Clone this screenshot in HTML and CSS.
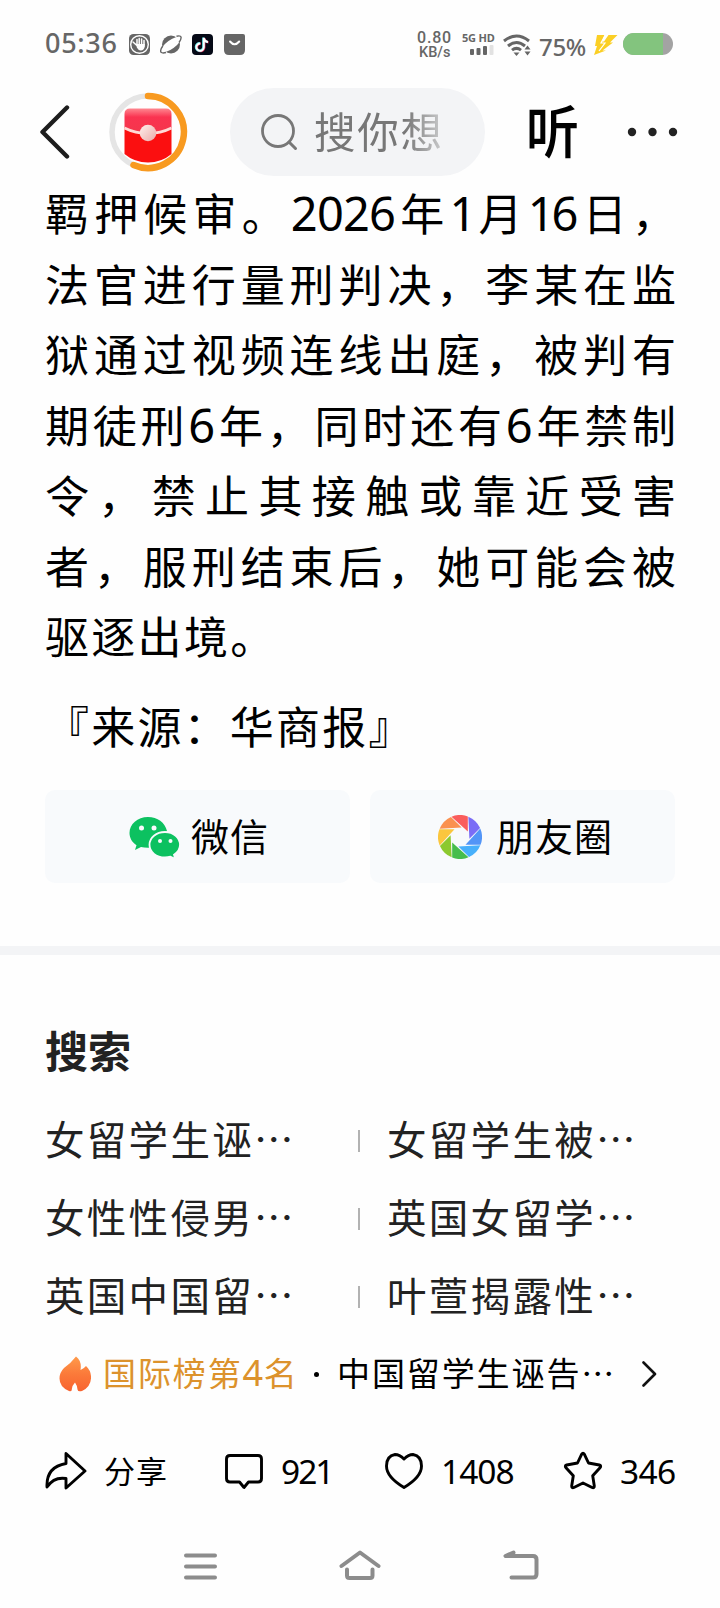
FILE: index.html
```html
<!DOCTYPE html>
<html lang="zh-CN">
<head>
<meta charset="utf-8">
<title>新闻</title>
<link rel="stylesheet" href="styles.css">
</head>
<body>
<div class="status">
  <span class="clock">05:36</span>
  <div class="apps">
    <svg width="21" height="21" viewBox="0 0 21 21"><rect width="21" height="21" rx="4.5" fill="#666"/><circle cx="10.5" cy="10.5" r="8.8" fill="none" stroke="#fff" stroke-width="1.4"/><path d="M4 8l4 3.5V5.500M10.200 10V4.500M12.600 10V5M15 11V6.500" fill="none" stroke="#fff" stroke-width="1.500" stroke-linecap="round"/><path d="M7.500 10h8.300v2.500q-.8 4-4 4-2.500 0-4-3z" fill="#fff"/></svg>
    <svg width="22" height="21" viewBox="0 0 22 21"><circle cx="11" cy="10.500" r="9" fill="#666"/><ellipse cx="11" cy="10.500" rx="11.500" ry="4.300" transform="rotate(-36 11 10.500)" fill="#fff"/><path d="M2.800 12Q-.2 16 1 18.300 2.500 19.500 6 18.500M16.500 2.300Q20.500 1.300 21 3q.5 2-2 5.500" fill="none" stroke="#666" stroke-width="1.400"/></svg>
    <svg width="21" height="21" viewBox="0 0 21 21"><rect width="21" height="21" rx="4" fill="#050916"/><g fill="none" stroke-width="2.300"><path d="M12.300 4v9.500a3.700 3.700 0 1 1-3.500-3.800M12.300 4.500q.8 3.500 4.200 3.800" stroke="#e8315b"/><path d="M11.300 3.500V13a3.700 3.700 0 1 1-3.500-3.800M11.300 4q.8 3.500 4.200 3.800" stroke="#5de4e8"/><path d="M11.800 3.800v9.500a3.700 3.700 0 1 1-3.500-3.800M11.800 4.300q.8 3.500 4.200 3.800" stroke="#fff" stroke-width="1.900"/></g></svg>
    <svg width="21" height="21" viewBox="0 0 21 21"><path d="M2 0h17q2 0 2 2v14q0 5-5 5H5q-5 0-5-5V2q0-2 2-2z" fill="#666"/><path d="M6 7.500q4.600 5.500 9.200 0" fill="none" stroke="#fff" stroke-width="2" stroke-linecap="round"/></svg>
  </div>
  <div class="speed"><span class="speed-value">0.80</span><span class="speed-unit">KB/s</span></div>
  <div class="cell"><span class="cell-label">5G HD</span>
    <svg width="24" height="10" viewBox="0 0 24 10"><g fill="#666"><rect y="4" width="4" height="6" rx="1"/><rect x="6.500" y="3" width="4" height="7" rx="1"/><rect x="13" y="1" width="4" height="9" rx="1"/></g><rect x="19.500" width="4" height="10" rx="1" fill="#e2e2e2"/></svg>
  </div>
  <svg class="wifi" width="29" height="22" viewBox="0 0 29 22"><g fill="none" stroke="#666" stroke-width="3"><path d="M1 7Q13.500-3 26 7"/><path d="M5 12Q13.500 5 22 12"/><path d="M9 16.200Q13.500 12.500 18 16.200"/></g><path d="M10.500 18.500h6L13.500 22z" fill="#666"/><path d="M21.500 15.500l3-4 3 4zM21.500 17.500l3 4 3-4z" fill="#666"/></svg>
  <span class="percent">75%</span>
  <svg class="bolt" width="24" height="21" viewBox="0 0 24 21"><path d="M3 1h7.500L8 7.500h2L14.500 1h9L16 8.500h3L8.500 16.500h3.500L0 21l3-9H1z" fill="#fbcf25"/><path d="M11.500.5L7 9h4l-6 8" fill="none" stroke="#fff" stroke-width="1.200"/></svg>
  <div class="battery"><div class="battery-fill"></div></div>
</div>

<div class="header">
  <svg class="back" width="30" height="54" viewBox="0 0 30 54"><path d="M27 2.500L2.500 27 27 51.500" fill="none" stroke="#1d1d1d" stroke-width="4.400" stroke-linecap="round" stroke-linejoin="round"/></svg>
  <svg class="packet" width="80" height="80" viewBox="0 0 80 80">
    <defs><linearGradient id="flap" x1="0" y1="0" x2="0" y2="1"><stop offset="0" stop-color="#ff8790"/><stop offset=".35" stop-color="#fa3350"/><stop offset="1" stop-color="#f4364c"/></linearGradient><linearGradient id="seal" x1="0" y1="0" x2="1" y2="1"><stop offset="0" stop-color="#fff0ec"/><stop offset="1" stop-color="#eaaaa8"/></linearGradient></defs>
    <circle cx="40" cy="40" r="36" fill="none" stroke="#e5e5e5" stroke-width="5.500"/>
    <path d="M40 4A36 36 0 1 1 25.500 73" fill="none" stroke="#f89a20" stroke-width="6.500" stroke-linecap="round"/>
    <path d="M16.500 36h47v26q-10 8.500-23.500 8.500T16.500 62z" fill="#fb0f10"/>
    <path d="M16.500 36V22q0-5.500 5.500-5.500h36q5.500 0 5.500 5.500v14q-11 5-23.500 5t-23.500-5z" fill="url(#flap)"/>
    <path d="M16.500 36q11 5.500 23.500 5.500T63.500 36" fill="none" stroke="#ffd9d5" stroke-width="2.800"/>
    <circle cx="40" cy="41" r="8.300" fill="url(#seal)"/>
  </svg>
  <div class="search">
    <svg width="37" height="37" viewBox="0 0 37 37"><circle cx="17" cy="17" r="15.500" fill="none" stroke="#777" stroke-width="2.800"/><path d="M28 28l6.500 6.500" stroke="#777" stroke-width="3" stroke-linecap="round"/></svg>
    <span class="search-text">搜你想</span>
  </div>
  <span class="listen">听</span>
  <svg class="more" width="52" height="10" viewBox="0 0 52 10"><g fill="#222"><circle cx="5" cy="5" r="4.200"/><circle cx="25.500" cy="5" r="4.200"/><circle cx="46" cy="5" r="4.200"/></g></svg>
</div>

<div class="article">
  <div class="line">羁押候审。<span class="num tight">2026</span>年<span class="num one">1</span>月<span class="num one">1</span><span class="num tight">6</span>日，</div>
  <div class="line">法官进行量刑判决，李某在监</div>
  <div class="line">狱通过视频连线出庭，被判有</div>
  <div class="line">期徒刑<span class="num">6</span>年，同时还有<span class="num">6</span>年禁制</div>
  <div class="line">令，禁止其接触或靠近受害</div>
  <div class="line">者，服刑结束后，她可能会被</div>
  <div class="line last">驱逐出境。</div>
  <div class="source">『来源：华商报』</div>
</div>

<div class="share">
  <div class="share-btn">
    <svg class="wechat" width="52" height="42" viewBox="0 0 52 42"><path d="M19 0C8.500 0 .5 7 .5 16c0 5 2.700 9.300 7 12.200L6 33l6-3q3.500 1 9 .8L38 14C36 5.500 28.500 0 19 0z" fill="#0cc160"/><path d="M36 15c-8.800 0-15.500 5.600-15.500 12.800S27.200 40.500 36 40.500q3 0 5.500-.8l4.700 2.300-1.200-4.300c3.800-2.400 6-5.800 6-9.900C51 20.600 44.500 15 36 15z" fill="#0cc160" stroke="#f8fafc" stroke-width="1.800"/><g fill="#f8fafc"><circle cx="12.500" cy="11" r="2.500"/><circle cx="25" cy="11" r="2.500"/><circle cx="31" cy="24" r="2"/><circle cx="41.500" cy="24" r="2"/></g></svg>
    <span>微信</span>
  </div>
  <div class="share-btn">
    <svg class="moments" width="44" height="44" viewBox="-22 -22 44 44">
      <defs><path id="blade" d="M-8.500-20.300A22 22 0 0 1 7.800-20.600V-5.500z"/></defs>
      <use href="#blade" fill="#fa5d5c"/><use href="#blade" fill="#7b6cf6" transform="rotate(45)"/><use href="#blade" fill="#5295f7" transform="rotate(90)"/><use href="#blade" fill="#48b0fb" transform="rotate(135)"/><use href="#blade" fill="#46bd4c" transform="rotate(180)"/><use href="#blade" fill="#8cc92f" transform="rotate(225)"/><use href="#blade" fill="#fbc63e" transform="rotate(270)"/><use href="#blade" fill="#fa9150" transform="rotate(315)"/>
    </svg>
    <span>朋友圈</span>
  </div>
</div>

<div class="divider"></div>

<div class="related">
  <h2>搜索</h2>
  <div class="terms">
    <span>女留学生诬…</span><i></i><span>女留学生被…</span>
    <span>女性性侵男…</span><i></i><span>英国女留学…</span>
    <span>英国中国留…</span><i></i><span>叶萱揭露性…</span>
  </div>
</div>

<div class="hot">
  <svg class="flame" width="32" height="36" viewBox="0 0 32 36"><defs><linearGradient id="fire" x1=".5" y1="0" x2=".5" y2="1"><stop offset="0" stop-color="#ff9b4b"/><stop offset=".5" stop-color="#fb7a3a"/><stop offset="1" stop-color="#f8632f"/></linearGradient></defs><path d="M17 .5q6 4.500 4.500 13.500 3.500-1.500 5.500-4 5.500 5 5 12.500-.5 8.500-9 12.500-4 1.200-4.500-1.500 0-3.500-2.500-7-3.300 3.500-3.200 7 .2 2.500-2.800 1.500Q.5 31 .5 22.500q0-6 4.500-10.500 7-5 12-11.500z" fill="url(#fire)"/></svg>
  <span class="rank">国际榜第<span class="hot-num">4</span>名</span>
  <span class="bullet"></span>
  <span class="topic">中国留学生诬告…</span>
  <svg class="chev" width="15" height="26" viewBox="0 0 15 26"><path d="M1.500 1.500L13 13 1.500 24.500" fill="none" stroke="#111" stroke-width="2.600" stroke-linecap="round" stroke-linejoin="round"/></svg>
</div>

<div class="actions">
  <div class="act act-share"><svg width="42" height="40" viewBox="0 0 42 40"><path d="M21 2.500L40 20 21 37v-9.500q-12-2-19 8.500Q1 16 21 12.500z" fill="none" stroke="#000" stroke-width="2.900" stroke-linejoin="round"/></svg><span class="act-cjk">分享</span></div>
  <div class="act act-comment"><svg width="40" height="40" viewBox="0 0 40 40"><path d="M6 4.500h28q3.500 0 3.500 3.500v19.500q0 3.500-3.500 3.500H24.500L20 36.500 15.500 31H6q-3.500 0-3.500-3.500V8q0-3.500 3.500-3.500z" fill="none" stroke="#000" stroke-width="2.900" stroke-linejoin="round"/></svg><span>921</span></div>
  <div class="act act-like"><svg width="40" height="40" viewBox="0 0 40 40"><path d="M20 8Q15.500 3.500 11 3.500 2.500 5 2.500 15q0 11 17.500 21.500Q37.500 26 37.500 15 37.500 5 29 3.500q-4.500 0-9 4.500z" fill="none" stroke="#000" stroke-width="2.900" stroke-linejoin="round"/></svg><span>1408</span></div>
  <div class="act act-star"><svg width="40" height="40" viewBox="0 0 40 40"><path d="M18.600 3.300q1.400-2.200 2.800 0L25.500 12l10.800 2q2.400.8.700 2.700l-7.300 8 1.600 10.300q0 2.400-2.200 1.500L20 32l-9.100 4.500q-2.200.9-2.200-1.500l1.600-10.300-7.300-8Q1.300 14.800 3.700 14l10.800-2z" fill="none" stroke="#000" stroke-width="2.900" stroke-linejoin="round"/></svg><span>346</span></div>
</div>

<div class="nav">
  <svg width="33" height="32" viewBox="0 0 33 32"><path d="M2 5.500h29M2 16.500h29M2 27.500h29" stroke="#8c8c8c" stroke-width="4" stroke-linecap="round"/></svg>
  <svg width="42" height="32" viewBox="0 0 42 32"><path d="M2.500 16L21 2.500 39.500 16M8 19.500v6Q8 28 10.500 28h20.500q2.500 0 2.500-2.500v-6" fill="none" stroke="#8c8c8c" stroke-width="4" stroke-linecap="round" stroke-linejoin="round"/></svg>
  <svg width="36" height="32" viewBox="0 0 36 32"><path d="M10.500 2.500L2.500 6h27.500q3.500 0 3.500 3.500V24q0 3.500-3.500 3.500H8.500" fill="none" stroke="#8c8c8c" stroke-width="4" stroke-linecap="round" stroke-linejoin="round"/></svg>
</div>
</body>
</html>
```
FILE: styles.css
```css
* { box-sizing: border-box; }
body {
  margin: 0;
  width: 720px;
  height: 1608px;
  overflow: hidden;
  background: #fefefe;
  color: #000;
  font-family: "Noto Sans CJK SC", sans-serif;
  text-spacing-trim: space-all;
  text-autospace: no-autospace;
}
svg { display: block; flex: none; }
span { white-space: nowrap; }

/* status bar */
.status {
  display: flex;
  align-items: flex-start;
  height: 76px;
  padding: 33px 0 0 45px;
  color: #666;
}
.clock {
  width: 84px;
  margin-top: -6px;
  font: 500 27px/32px "Noto Sans", sans-serif;
  letter-spacing: .7px;
}
.apps { display: flex; gap: 10.200px; margin-top: 1px; width: 288px; }
.speed { display: flex; flex-direction: column; width: 45px; }
.speed span { font-family: Roboto, "Noto Sans", sans-serif; line-height: 15px; }
.speed-value { font-size: 16px; font-weight: 500; margin-top: -3px; letter-spacing: .8px; }
.speed-unit { font-size: 14.500px; font-weight: 500; padding-left: 2px; }
.cell { display: flex; flex-direction: column; width: 41px; }
.cell-label { font: 700 11px/10px "Noto Sans", sans-serif; letter-spacing: -.2px; }
.cell svg { margin: 2px 0 0 8px; }
.wifi { margin-top: 1px; }
.percent {
  margin-left: 7px;
  width: 55px;
  font: 500 24px/28px "Noto Sans", sans-serif;
  letter-spacing: -.3px;
}
.bolt { margin-top: 1px; }
.battery {
  width: 50px;
  height: 22px;
  margin-left: 5px;
  border-radius: 11px;
  background: #a3a3a3;
  overflow: hidden;
}
.battery-fill { width: 40px; height: 22px; background: #83c47e; }

/* top bar */
.header { display: flex; align-items: center; height: 112px; padding-left: 40px; }
.packet { margin: -1px 0 0 38px; }
.search {
  display: flex;
  align-items: center;
  width: 255px;
  height: 88px;
  margin-left: 42px;
  padding-left: 31px;
  border-radius: 44px;
  background: #f3f4f6;
}
.search-text {
  margin: -4px 0 0 16px;
  font-size: 41.500px;
  line-height: 88px;
  letter-spacing: 1.800px;
  color: #777;
  -webkit-mask-image: linear-gradient(90deg, #000 70%, rgba(0,0,0,.3) 100%);
  mask-image: linear-gradient(90deg, #000 70%, rgba(0,0,0,.3) 100%);
}
.listen {
  width: 58px;
  margin: -9px 0 0 39px;
  font-size: 57px;
  line-height: 80px;
  font-weight: 500;
  transform: scaleX(.94);
}
.more { margin-left: 45px; }

/* article */
.article { padding: 0 44px 0 45px; height: 603px; margin-top: -11px; }
.line {
  height: 70.500px;
  font-size: 44px;
  line-height: 70.500px;
  white-space: nowrap;
  text-align: justify;
  text-align-last: justify;
}
.line.last { text-align-last: left; letter-spacing: 2.300px; }
.num { font: 400 47px/60px "Noto Sans", sans-serif; }
.num.tight { letter-spacing: -.8px; }
.num.one { letter-spacing: -3px; }
.source { margin-top: 19px; font-size: 44px; line-height: 70px; letter-spacing: 2.200px; }

/* share buttons */
.share { display: flex; gap: 20px; margin-top: 10px; padding: 0 45px; }
.share-btn {
  display: flex;
  align-items: center;
  flex: none;
  width: 305px;
  height: 93px;
  border-radius: 10px;
  background: #f8fafc;
  font-size: 38px;
  line-height: 86px;
  letter-spacing: 1px;
}
.share-btn span { margin-top: -4px; }
.wechat { margin: 2px 10px 0 84px; }
.moments { margin: 0 14px 0 68px; }
.divider { height: 9px; margin-top: 63px; background: #f3f4f6; }

/* related searches */
.related { padding: 64px 45px 0; color: #222; }
.related h2 { margin: 0; font-size: 43px; line-height: 60px; font-weight: 700; }
.terms {
  display: grid;
  grid-template-columns: 313px 29px 1fr;
  grid-auto-rows: 78px;
  align-items: center;
  margin-top: 20px;
  font-size: 39.500px;
  line-height: 78px;
  letter-spacing: 2.300px;
}
.terms i { width: 2px; height: 22px; margin-top: 5px; background: #b2b2b2; }

/* hot list entry */
.hot {
  display: flex;
  align-items: center;
  height: 76px;
  margin-top: 3px;
  padding-left: 59px;
  font-size: 33px;
  line-height: 70px;
  letter-spacing: 1.900px;
}
.rank { width: 198px; margin: -4px 0 0 12px; color: #dc922c; }
.hot-num { font-size: 36px; line-height: 40px; font-family: "Noto Sans", sans-serif; letter-spacing: .5px; }
.bullet { width: 5px; height: 5px; margin: 0 18px 0 13px; border-radius: 50%; background: #000; }
.topic { width: 304px; margin-top: -4px; }
.chev { margin-left: 1px; }

/* actions */
.actions { display: flex; height: 120px; padding-left: 45px; }
.act {
  display: flex;
  align-items: center;
  height: 118px;
  font: 400 33.500px/60px "Noto Sans", sans-serif;
  letter-spacing: -.6px;
}
.act-share { width: 179px; }
.act-comment { width: 160px; letter-spacing: -2px; }
.act-like { width: 179px; letter-spacing: -1px; }
.act span { margin-left: 17px; }
.act .act-cjk { margin-top: -3px; font: 400 31px/60px "Noto Sans CJK SC", sans-serif; letter-spacing: 1px; }

/* system navigation */
.nav { display: flex; gap: 122px; padding-left: 184px; margin-top: 18px; }
```
